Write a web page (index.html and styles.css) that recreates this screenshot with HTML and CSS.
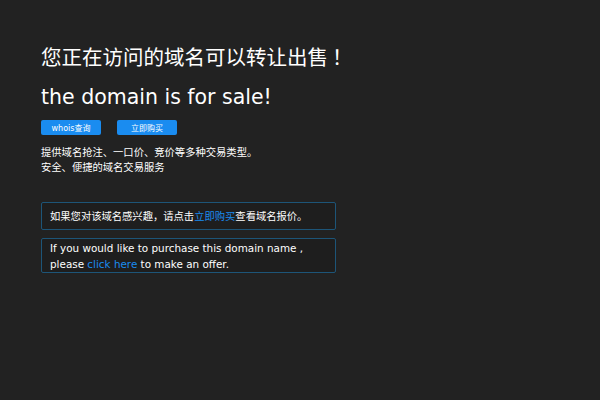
FILE: index.html
```html
<!DOCTYPE html>
<html lang="zh-CN">
<head>
    <meta charset="UTF-8">
    <meta name="viewport" content="width=device-width, initial-scale=1.0">
    <title>域名出售</title>
    <link rel="stylesheet" href="styles.css">
</head>
<body>

    <div class="container">
        <h1 class="title-cn">您正在访问的域名可以转让出售<span class="bang">！</span></h1>
        <h2 class="title-en">the domain is for sale!</h2>

        <div class="actions">
            <a class="btn" href="#">whois查询</a>
            <a class="btn" href="#">立即购买</a>
        </div>

        <p class="intro">
            提供域名抢注、一口价、竞价等多种交易类型。<br>
            安全、便捷的域名交易服务
        </p>

        <div class="notice notice-cn">
            如果您对该域名感兴趣<span class="comma">，</span>请点击<a href="#">立即购买</a>查看域名报价。
        </div>

        <div class="notice notice-en">
            If you would like to purchase this domain name ,<br>
            please <a href="#">click here</a> to make an offer.
        </div>
    </div>

</body>
</html>
```

FILE: styles.css
```css
body {
    font-family: "DejaVu Sans", "Noto Sans CJK SC", sans-serif;
    margin: 0;
    background-color: #222222;
    color: #ffffff;
}

.container {
    padding: 44px 41px;
}

.title-cn {
    font-size: 20.5px;
    font-weight: normal;
    line-height: 28px;
    margin: 0 0 10px 0;
}

/* full-width punctuation, centred in its cell */
.bang,
.comma {
    display: inline-block;
    width: 1em;
    text-align: center;
}

.bang {
    width: 1.4em;
}

.title-en {
    font-size: 20.5px;
    font-weight: normal;
    line-height: 30px;
    margin: 0 0 8px 0;
}

.actions {
    display: flex;
    gap: 16px;
    margin-bottom: 10px;
}

.btn {
    display: flex;
    justify-content: center;
    align-items: center;
    width: 60px;
    height: 15px;
    font-size: 8px;
    color: white;
    text-decoration: none;
    background-color: #1a8cf0;
    border-radius: 2px;
}

.intro {
    font-size: 10.3px;
    line-height: 15px;
    margin: 0 0 27px 0;
}

.notice {
    width: 277px;
    padding: 6px 8px;
    border: 1px solid #1d5578;
    border-radius: 2px;
    background-color: #1e1e1e;
    margin-bottom: 8px;
}

.notice a {
    color: #1a8cf0;
    text-decoration: none;
}

.notice-cn {
    font-size: 10.3px;
    line-height: 14px;
}

.notice-en {
    font-size: 10.4px;
    line-height: 16px;
    padding: 1px 8px 0 8px;
}
```
